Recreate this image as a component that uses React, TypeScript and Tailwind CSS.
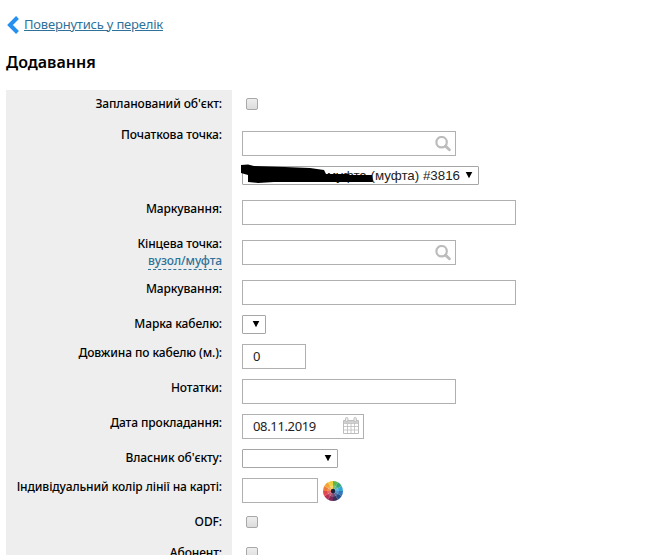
import type { ReactNode } from 'react'

const WHEEL = ['#5cb84f', '#35a978', '#35a5d8', '#3079bd', '#26508c', '#39315f', '#7b2a5c', '#b92f52', '#e2474b', '#ee7a3a', '#f2a536', '#f0d03c']

function wedge(index: number, radius: number) {
    const a = (index * 30 * Math.PI) / 180
    const b = ((index + 1) * 30 * Math.PI) / 180
    return `M10 10L${10 + radius * Math.sin(a)} ${10 - radius * Math.cos(a)}A${radius} ${radius} 0 0 1 ${10 + radius * Math.sin(b)} ${10 - radius * Math.cos(b)}Z`
}

function ColorWheel() {
    return (
        <svg width="20" height="20" viewBox="0 0 20 20">
            {WHEEL.map((color, index) => (
                <path key={'wheel-' + index} d={wedge(index, 10)} fill={color} />
            ))}
            <circle cx="10" cy="10" r="6" fill="#ffffff" fillOpacity="0.18" />
            <circle cx="10" cy="10" r="2.2" fill="#1d2238" />
        </svg>
    )
}

function SearchIcon() {
    return (
        <svg width="16" height="16" viewBox="0 0 16 16" fill="none" stroke="#bcbcbc">
            <circle cx="6.6" cy="6.2" r="5.2" strokeWidth="2.2" />
            <path d="M10.5 10.1L14.4 13.7" strokeWidth="2.8" strokeLinecap="round" />
        </svg>
    )
}

function CalendarIcon() {
    return (
        <svg className="-mt-0.5" width="16" height="17" viewBox="0 0 16 17" fill="none" stroke="#bdbdbd">
            <path d="M0.5 3.5H15.5V16.5H0.5Z" fill="#ffffff" />
            <path d="M1 4H15V6H1Z" fill="#d0d0d0" stroke="none" />
            <path d="M0.5 6.5H15.5M0.5 9.5H15.5M0.5 13H15.5M4.5 6V16.5M8 6V16.5M11.5 6V16.5" strokeWidth="0.8" />
            <rect x="2.5" y="0.5" width="2.4" height="4.2" rx="1.1" fill="#eeeeee" />
            <rect x="11" y="0.5" width="2.4" height="4.2" rx="1.1" fill="#eeeeee" />
        </svg>
    )
}

function Field({ width, children }: { width: string, children?: ReactNode }) {
    return (
        <div className={`h-[25px] flex items-center justify-between border border-[#b0b0b0] bg-white pl-2.5 pr-1 text-[13px] tracking-[-0.35px] text-[#222] ${width}`}>
            {children}
        </div>
    )
}

function Select({ width, children }: { width: string, children?: ReactNode }) {
    return (
        <div className={`relative h-[19px] flex items-center justify-end rounded-[1px] border border-[#a6a6a6] bg-white pr-[5px] ${width}`}>
            {children}
            <svg width="8" height="7" viewBox="0 0 8 7">
                <path d="M0.7 0H7.3L4 6.3Z" fill="#000000" />
            </svg>
        </div>
    )
}

function Checkbox() {
    return (
        <div className="mt-[3px] ml-1 size-3 rounded-[2px] border border-[#a8a8a8] bg-gradient-to-b from-[#eeeeee] to-[#dcdcdc]" />
    )
}

function Row({ label, height, labelClass = 'pt-[5px]', extra, children }: { label: string, height: string, labelClass?: string, extra?: ReactNode, children: ReactNode }) {
    return (
        <div className={`flex shrink-0 ${height}`}>
            <div className={`w-[226px] shrink-0 bg-[#eeeeee] pr-2.5 text-right text-[12px] leading-[18px] font-medium tracking-[-0.1px] whitespace-nowrap text-black ${labelClass}`}>
                {label}
                {extra}
            </div>
            <div className="pt-[5px] pl-2.5">{children}</div>
        </div>
    )
}

export default function App() {
    return (
        <div className="flex h-[555px] w-[659px] flex-col overflow-hidden bg-white pl-1.5 font-['Noto_Sans',sans-serif]">
            <a href="#" className="mt-[15px] flex h-[19px] shrink-0 items-center text-[#2f7299]">
                <svg width="14" height="18" viewBox="0 0 14 18" className="mr-1">
                    <path d="M11.5 1.5L4 9L11.5 16.5" fill="none" stroke="#2590f0" strokeWidth="4" />
                </svg>
                <span className="text-[13px] tracking-[-0.2px] underline">Повернутись у перелік</span>
            </a>
            <h1 className="mt-[17px] h-[39px] shrink-0 text-[16px] leading-[22px] font-semibold text-black">Додавання</h1>

            <Row label="Запланований об'єкт:" height="h-[36px]">
                <Checkbox />
            </Row>
            <Row label="Початкова точка:" height="h-[69px]" labelClass="pt-0">
                <div className="flex flex-col gap-2.5">
                    <Field width="w-[214px]">
                        <span />
                        <SearchIcon />
                    </Field>
                    <Select width="w-[237px]">
                        <span className="mr-[5px] font-['Liberation_Sans',sans-serif] text-[13.33px] leading-[17px] text-[#222]">муфта (муфта) #3816</span>
                        {/* scribble over the hidden part of the name */}
                        <svg className="absolute -top-[3px] -left-[3px]" width="134" height="22" viewBox="0 0 134 22">
                            <path d="M1 1L8 0.5L14 2L45 3L70 4L84 6L86 10L108 10L110 11L132 11L133 18L112 18L85 18L60 18L34 18L18 19L8 18L8 11L1 9Z" fill="#000000" />
                        </svg>
                    </Select>
                </div>
            </Row>
            <Row label="Маркування:" height="h-[40px]">
                <Field width="w-[274px]" />
            </Row>
            <Row
                label="Кінцева точка:"
                height="h-[40px]"
                labelClass="pt-0"
                extra={
                    <div className="flex justify-end">
                        <span className="h-[17px] border-b border-dashed border-[#2f7299] leading-[16px] text-[#2f7299]">вузол/муфта</span>
                    </div>
                }
            >
                <Field width="w-[214px]">
                    <span />
                    <SearchIcon />
                </Field>
            </Row>
            <Row label="Маркування:" height="h-[35px]">
                <Field width="w-[274px]" />
            </Row>
            <Row label="Марка кабелю:" height="h-[29px]">
                <Select width="w-[24px]" />
            </Row>
            <Row label="Довжина по кабелю (м.):" height="h-[35px]">
                <Field width="w-[64px]">0</Field>
            </Row>
            <Row label="Нотатки:" height="h-[35px]">
                <Field width="w-[214px]" />
            </Row>
            <Row label="Дата прокладання:" height="h-[35px]">
                <Field width="w-[122px]">
                    <span>08.11.2019</span>
                    <CalendarIcon />
                </Field>
            </Row>
            <Row label="Власник об'єкту:" height="h-[29px]">
                <Select width="w-[96px]" />
            </Row>
            <Row label="Індивідуальний колір лінії на карті:" height="h-[35px]">
                <div className="flex items-center gap-[5px]">
                    <Field width="w-[76px]" />
                    <ColorWheel />
                </div>
            </Row>
            <Row label="ODF:" height="h-[31px]">
                <Checkbox />
            </Row>
            <Row label="Абонент:" height="h-[30px]">
                <Checkbox />
            </Row>
        </div>
    )
}
